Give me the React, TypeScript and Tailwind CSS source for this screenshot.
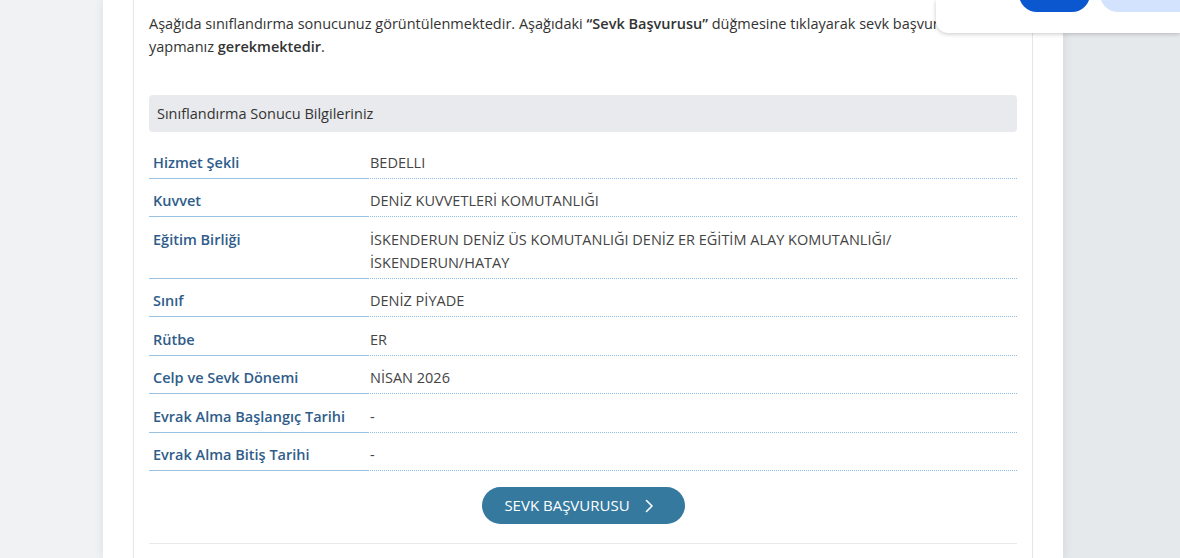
import React from "react";

type InfoRow = {
  label: string;
  value: React.ReactNode;
};

const rows: InfoRow[] = [
  { label: "Hizmet Şekli", value: "BEDELLI" },
  { label: "Kuvvet", value: "DENİZ KUVVETLERİ KOMUTANLIĞI" },
  {
    label: "Eğitim Birliği",
    value: (
      <>
        İSKENDERUN DENİZ ÜS KOMUTANLIĞI DENİZ ER EĞİTİM ALAY KOMUTANLIĞI/
        <br />
        İSKENDERUN/HATAY
      </>
    ),
  },
  { label: "Sınıf", value: "DENİZ PİYADE" },
  { label: "Rütbe", value: "ER" },
  { label: "Celp ve Sevk Dönemi", value: "NİSAN 2026" },
  { label: "Evrak Alma Başlangıç Tarihi", value: "-" },
  { label: "Evrak Alma Bitiş Tarihi", value: "-" },
];

function ResultRow({ label, value }: InfoRow) {
  return (
    <div className="flex">
      <div className="w-[218px] shrink-0 border-b border-[#9cc2e2] pl-[4px] pt-[10.5px] pb-[4px] leading-[23px] font-semibold text-[#2f5d8a]">
        {label}
      </div>
      <div className="flex-1 border-b border-dotted border-[#8fbde3] pl-[3px] pt-[10.5px] pb-[4px] leading-[23px] text-[#444]">
        {value}
      </div>
    </div>
  );
}

export default function App() {
  return (
    <div
      className="relative flex h-[558px] w-full overflow-hidden text-[14.5px]"
      style={{ fontFamily: '"Open Sans", "Noto Sans", sans-serif' }}
    >
      {/* left gutter */}
      <div className="w-[103px] shrink-0 bg-[#f1f2f4]" />

      {/* page column */}
      <main className="relative z-10 w-[960px] shrink-0 bg-white px-[30px] shadow-[0_0_10px_rgba(0,0,0,0.09)]">
        <div className="h-full border-x border-[#e6e6e6] px-[15px] pt-[12px]">
          <p className="leading-[23px] text-[#333]">
            Aşağıda sınıflandırma sonucunuz görüntülenmektedir. Aşağıdaki{" "}
            <b className="font-semibold">“Sevk Başvurusu”</b> düğmesine tıklayarak sevk başvurusunu
            yapmanız <b className="font-semibold">gerekmektedir</b>.
          </p>

          <div className="mt-[37px] flex h-[37px] items-center rounded-[4px] bg-[#e8eaed] px-[8px] text-[#333]">
            Sınıflandırma Sonucu Bilgileriniz
          </div>

          <div className="mt-[8px]">
            {rows.map((r) => (
              <ResultRow key={r.label} label={r.label} value={r.value} />
            ))}
          </div>

          <div className="mt-[16px] flex justify-center">
            <button className="flex h-[37px] w-[203px] items-center justify-center gap-[14px] rounded-full bg-[#35799f] pr-[8px] text-[15px] text-white">
              <span>SEVK BAŞVURUSU</span>
              <svg width="10" height="14" viewBox="0 0 10 14" fill="none">
                <path d="M2.5 1.5 8 7l-5.5 5.5" stroke="white" strokeWidth="1.6" strokeLinecap="round" strokeLinejoin="round" />
              </svg>
            </button>
          </div>

          <div className="mt-[19px] border-t border-[#e8e8e8]" />
        </div>
      </main>

      {/* right gutter */}
      <div className="flex-1 bg-[#e6e9ec]" />

      {/* browser prompt overlay */}
      <div className="absolute top-0 right-0 left-[936px] z-20 h-[33px] rounded-bl-[12px] bg-white shadow-[0_1px_4px_rgba(0,0,0,0.22)]">
        <div className="absolute top-[-24px] left-[83px] h-[36px] w-[71px] rounded-full bg-[#0b57d0]" />
        <div className="absolute top-[-24px] left-[164px] h-[36px] w-[120px] rounded-full bg-[#d3e3fd]" />
      </div>
    </div>
  );
}
